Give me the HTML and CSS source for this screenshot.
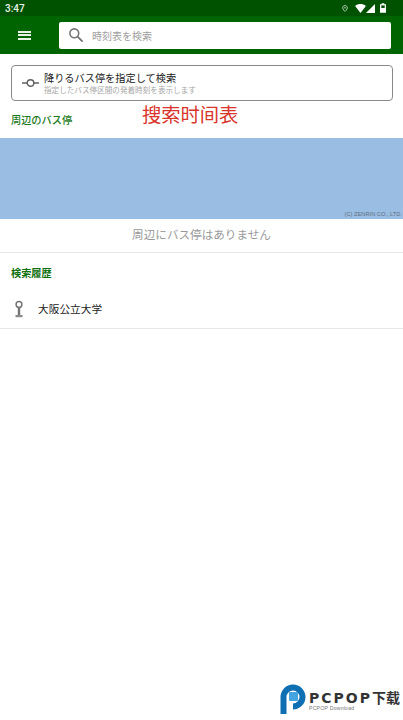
FILE: index.html
```html
<!DOCTYPE html>
<html lang="ja">
<head>
    <meta charset="UTF-8">
    <meta name="viewport" content="width=device-width, initial-scale=1.0">
    <title>時刻表を検索</title>
    <link rel="stylesheet" href="styles.css">
</head>
<body>
    <div class="status-bar">
        <span class="clock">3:47</span>
        <div class="status-icons">
            <svg width="6" height="9" viewBox="0 0 9 11"><path d="M4.5 1C2.6 1 1 2.5 1 4.4 1 6.8 4.5 10 4.5 10S8 6.8 8 4.4C8 2.5 6.4 1 4.5 1z" fill="none" stroke="#b9d3b9" stroke-width="1.4"/><circle cx="4.5" cy="4.4" r="1.2" fill="#b9d3b9"/></svg>
            <svg class="wifi" width="11" height="9" viewBox="0 0 12 10"><path d="M0 2.2C3.4-.7 8.6-.7 12 2.2L6 10z" fill="#fff"/></svg>
            <svg class="signal" width="9" height="9" viewBox="0 0 10 10"><path d="M10 0v10H0z" fill="#fff"/></svg>
            <svg class="battery" width="6" height="10" viewBox="0 0 7 11"><path d="M2 0h3v1h2v10H0V1h2z" fill="#fff"/><rect x="1.5" y="2.5" width="4" height="3" fill="#005200"/></svg>
        </div>
    </div>

    <header class="toolbar">
        <button class="menu-button" aria-label="menu">
            <span></span><span></span><span></span>
        </button>
        <div class="search-box">
            <svg width="16" height="16" viewBox="0 0 16 16"><circle cx="6.3" cy="6.3" r="4.4" fill="none" stroke="#757575" stroke-width="1.6"/><path d="M9.6 9.6L14.6 14.6" stroke="#757575" stroke-width="1.9"/></svg>
            <span>時刻表を検索</span>
        </div>
    </header>

    <main>
        <div class="stop-search">
            <svg width="17" height="10" viewBox="0 0 17 10"><circle cx="8.5" cy="5" r="3.3" fill="none" stroke="#616161" stroke-width="1.4"/><path d="M0 5h5M12 5h5" stroke="#616161" stroke-width="1.4"/></svg>
            <div class="stop-search-text">
                <div class="stop-search-title">降りるバス停を指定して検索</div>
                <div class="stop-search-sub">指定したバス停区間の発着時刻を表示します</div>
            </div>
        </div>

        <h2 class="section-title nearby-title">周辺のバス停</h2>
        <div class="caption">搜索时间表</div>

        <div class="map"><span>(C) ZENRIN CO., LTD.</span></div>
        <div class="no-stops">周辺にバス停はありません</div>

        <h2 class="section-title history-title">検索履歴</h2>
        <div class="history-row">
            <svg width="10" height="18" viewBox="0 0 10 18"><circle cx="5" cy="4.5" r="2.9" fill="none" stroke="#757575" stroke-width="1.5"/><rect x="3.8" y="7.5" width="2.4" height="8" fill="#757575"/><rect x="1.5" y="15" width="7" height="2.2" fill="#8a8a8a"/></svg>
            <span>大阪公立大学</span>
        </div>
    </main>

    <div class="watermark">
        <svg width="26" height="31" viewBox="0 0 26 31"><path d="M3.5 30V13A9.5 9.5 0 1 1 13 22.5" fill="none" stroke="#0f6fb3" stroke-width="6"/><rect x="9" y="8" width="9" height="9" rx="1" fill="#45a5e0"/></svg>
        <div class="watermark-text">
            <div class="watermark-name">PCPOP<span>下载</span></div>
            <div class="watermark-sub">PCPOP Download</div>
        </div>
    </div>
</body>
</html>
```

FILE: styles.css
```css
* { box-sizing: border-box; }
body { margin: 0; height: 720px; overflow: hidden; position: relative; background-color: white; font-family: "Noto Sans CJK JP", Roboto, sans-serif; }

.status-bar { height: 16px; padding: 0 17px 0 5px; display: flex; justify-content: space-between; align-items: center; background-color: #005200; color: #e8f2e8; }
.clock { font-family: Roboto, sans-serif; font-size: 10px; font-weight: 500; }
.status-icons { display: flex; align-items: center; }
.wifi { margin-left: 7px; }
.battery { margin-left: 5px; }

.toolbar { height: 38px; padding: 5px 12px 5px 18px; display: flex; align-items: center; background-color: #006400; }
.menu-button { width: 13px; height: 9px; padding: 0; margin-right: 28px; border: none; background: none; display: flex; flex-direction: column; justify-content: space-between; }
.menu-button span { display: block; height: 2px; background-color: #e8f2e8; }
.search-box { flex: 1; height: 27px; padding-left: 9px; display: flex; align-items: center; gap: 8px; background-color: white; border-radius: 2px; font-size: 10px; color: #9e9e9e; }

.stop-search { height: 36px; margin: 11px 10px 0 11px; padding-left: 10px; display: flex; align-items: center; gap: 5px; border: 1px solid #8a8a8a; border-radius: 4px; }
.stop-search-text { padding-bottom: 1px; }
.stop-search-title { font-size: 10.2px; line-height: 14px; color: #212121; }
.stop-search-sub { font-size: 7.6px; line-height: 10px; color: #a5a5a5; }

.section-title { margin: 0; padding-left: 11px; font-size: 10.2px; font-weight: 500; color: #1b7a1b; }
.nearby-title { height: 37px; line-height: 37px; }
.caption { position: absolute; left: 142px; top: 99px; font-size: 19.3px; line-height: 30px; color: #d9342b; }

.map { height: 81px; padding: 0 1px 2px 0; display: flex; justify-content: flex-end; align-items: flex-end; background-color: #9abde3; font-family: "Liberation Sans", sans-serif; font-size: 5.7px; color: #5f6f80; }
.no-stops { height: 34px; border-bottom: 1px solid #e6e6e6; text-align: center; font-size: 11.6px; line-height: 31px; color: #999; }

.history-title { height: 39px; line-height: 39px; font-weight: 700; color: #0f700f; }
.history-row { height: 37px; padding: 0 0 3px 14px; display: flex; align-items: center; gap: 14px; border-bottom: 1px solid #e6e6e6; font-size: 10.7px; color: #212121; }

.watermark { position: absolute; left: 280px; top: 684px; display: flex; align-items: center; gap: 3px; }
.watermark-text { padding-top: 3px; }
.watermark-name { font-family: "DejaVu Sans", sans-serif; font-size: 14px; line-height: 14px; font-weight: 700; letter-spacing: 2px; color: #333; white-space: nowrap; }
.watermark-name span { font-family: "Noto Sans CJK SC", sans-serif; letter-spacing: 0; }
.watermark-sub { font-family: "Liberation Sans", sans-serif; font-size: 5.2px; line-height: 7px; letter-spacing: 0.2px; color: #777; }
```
